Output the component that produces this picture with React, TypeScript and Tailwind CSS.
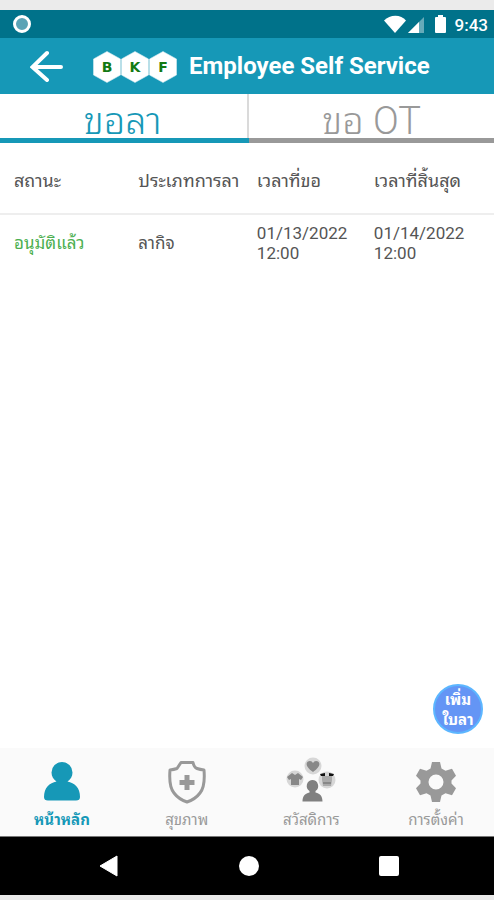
import { ReactNode, useState } from "react";

const requests = [
  { status: "อนุมัติแล้ว", type: "ลากิจ", from: ["01/13/2022", "12:00"], to: ["01/14/2022", "12:00"] },
];

function StatusBar() {
  return (
    <div className="flex h-7 shrink-0 items-center justify-between bg-[#00728a] pl-3 pr-1.5 text-white">
      <svg width="20" height="20" viewBox="0 0 20 20">
        <circle cx="10" cy="10" r="7.5" fill="#5ba3b5" stroke="#fff" strokeWidth="3" />
      </svg>
      <div className="flex items-center">
        <svg width="71" height="20" viewBox="0 0 71 20" fill="#fff">
          <path d="M0 6.500C6 .2 17 .2 22 6.500L11 19Z" />
          <path d="M40 3V19H24Z" opacity=".4" />
          <path d="M35 8V19H24Z" />
          <path d="M54 1h5v2h2q1 0 1 1v14q0 1-1 1h-9q-1 0-1-1V4q0-1 1-1h2z" />
        </svg>
        <span className="pt-0.5 text-[17px] font-medium leading-5">9:43</span>
      </div>
    </div>
  );
}

function Hexagon({ letter }: { letter: string }) {
  return (
    <svg width="28" height="32" viewBox="0 0 28 32">
      <path d="M14 .5 27.500 8V24L14 31.500.5 24V8Z" fill="#fff" stroke="#d9edf1" strokeWidth=".6" />
      <text x="14" y="21" textAnchor="middle" className="font-['DejaVu_Sans'] text-sm font-bold" fill="#137a13">
        {letter}
      </text>
    </svg>
  );
}

function Header() {
  return (
    <header className="flex h-14 shrink-0 items-center bg-[#1698b7] pl-7">
      <button aria-label="Back" className="p-0.5">
        <svg width="33" height="32" viewBox="0 0 33 32" fill="none" stroke="#fff" strokeWidth="4" strokeLinecap="round">
          <path d="M31 17H3M17 3 2.500 17 17 30" />
        </svg>
      </button>
      <div className="ml-7 mt-0.5 flex">
        <Hexagon letter="B" />
        <Hexagon letter="K" />
        <Hexagon letter="F" />
      </div>
      <h1 className="ml-3 whitespace-nowrap text-2xl font-bold text-white">Employee Self Service</h1>
    </header>
  );
}

function Tabs({ active, onSelect }: { active: number; onSelect: (i: number) => void }) {
  return (
    <div className="flex h-[49px] shrink-0" role="tablist">
      {["ขอลา", "ขอ OT"].map((label, i) => (
        <button
          key={label}
          role="tab"
          aria-selected={active === i}
          onClick={() => onSelect(i)}
          className={`flex flex-1 items-center justify-center border-b-[5px] pt-2.5 text-[38px] font-light leading-9 ${
            active === i ? "border-[#1698b7] text-[#1698b7]" : "border-[#999999] text-[#999999]"
          } ${i === 0 ? "pr-1 shadow-[inset_-2px_0_0_#dadada]" : ""}`}
        >
          {label}
        </button>
      ))}
    </div>
  );
}

function RequestTable() {
  return (
    <table className="w-full table-fixed text-left text-[17px] leading-5 text-[#555555]">
      <thead className="text-lg leading-5">
        <tr className="h-[71px] border-b-2 border-[#eeeeee]">
          <th className="w-[28%] pl-3.5 pt-1.5 font-normal">สถานะ</th>
          <th className="w-[24%] whitespace-nowrap pt-1.5 font-normal">ประเภทการลา</th>
          <th className="w-[117px] pt-1.5 font-normal">เวลาที่ขอ</th>
          <th className="pt-1.5 font-normal">เวลาที่สิ้นสุด</th>
        </tr>
      </thead>
      <tbody>
        {requests.map((r) => (
          <tr key={r.from[0]} className="h-14">
            <td className="pl-3.5 text-[#4caf50]">{r.status}</td>
            <td>{r.type}</td>
            <td>
              {r.from[0]}
              <br />
              {r.from[1]}
            </td>
            <td>
              {r.to[0]}
              <br />
              {r.to[1]}
            </td>
          </tr>
        ))}
      </tbody>
    </table>
  );
}

function NavItem({ label, active, children }: { label: string; active?: boolean; children: ReactNode }) {
  return (
    <a
      href="#"
      className={`flex w-[110px] flex-col items-center pt-2 text-[15px] leading-5 ${
        active ? "font-bold text-[#1698b7]" : "text-[#999999]"
      }`}
    >
      <svg width="52" height="50" viewBox="0 0 52 50" fill="currentColor">
        {children}
      </svg>
      <span className="mt-1">{label}</span>
    </a>
  );
}

function BottomNav() {
  return (
    <nav className="flex h-[88px] shrink-0 justify-between bg-[#fafafa] pl-[7px] pr-[3px]">
      <NavItem label="หน้าหลัก" active>
        <path d="M26 6a10.500 10.500 0 0 1 10.500 10.500c0 4-2 7-5 9 7 1.500 12.500 6 12.500 15.500q0 3.500-4 3.500H12q-4 0-4-3.500c0-9.500 5.500-14 12.500-15.500-3-2-5-5-5-9A10.500 10.500 0 0 1 26 6Z" />
      </NavItem>
      <NavItem label="สุขภาพ">
        <path
          d="M20 6.500h12q1 5 4 6t7 1.500c1 12 0 18-4 23-3 4-7 7-13 9-6-2-10-5-13-9-4-5-5-11-4-23 4-.5 4-.5 7-1.500t4-6Z"
          fill="none"
          stroke="currentColor"
          strokeWidth="3"
          strokeLinejoin="round"
        />
        <path d="M23.500 19h5v5h5v5h-5v5h-5v-5h-5v-5h5z" />
      </NavItem>
      <NavItem label="สวัสดิการ">
        <g fill="#d7d7d7">
          <circle cx="28" cy="10" r="8.500" />
          <circle cx="10" cy="23" r="8.500" />
          <circle cx="42" cy="24" r="8.500" />
        </g>
        <path d="M28 16c-9-6-7-11-3-11q2 0 3 2 1-2 3-2c4 0 6 5-3 11ZM7 17l3 2 3-2 5 4-2 3-2-1v6H6v-6l-2 1-2-3Z" fill="#888" />
        <path d="M37 20h10v4l-1 6h-8l-1-6Z" fill="#aaa" />
        <path d="M35 18l5-1v3h-4ZM49 18l-5-1v3h4Z" fill="#111" />
        <path d="M38 27h8" stroke="#888" strokeWidth="2" />
        <path d="M27 24a6 6 0 0 1 3.500 11v1.500c5 1 7 4 7 9h-20c0-5 2-8 7-9V35A6 6 0 0 1 27 24Z" fill="#808080" />
      </NavItem>
      <NavItem label="การตั้งค่า">
        <path
          fillRule="evenodd"
          d="M22 6h8l1.500 6.500 4 2.300 6.500-2 4 7-4.500 4.700v3l4.500 4.700-4 7-6.500-2-4 2.300L30 46h-8l-1.500-6.500-4-2.300-6.500 2-4-7 4.500-4.700v-3L6 19.800l4-7 6.500 2 4-2.300ZM26 18.500a7.500 7.500 0 1 0 0 15 7.500 7.500 0 0 0 0-15Z"
        />
      </NavItem>
    </nav>
  );
}

function SystemNav() {
  return (
    <div className="flex h-[59px] shrink-0 items-center justify-center gap-[120px] border-t border-[#777777] bg-black pl-1">
      <button aria-label="Back">
        <svg width="20" height="22" viewBox="0 0 20 22">
          <path d="M1 11 18 1V21Z" fill="#fff" stroke="#fff" strokeLinejoin="round" />
        </svg>
      </button>
      <button aria-label="Home" className="size-5 rounded-full bg-white" />
      <button aria-label="Recent apps" className="size-5 rounded-xs bg-white" />
    </div>
  );
}

export default function App() {
  const [tab, setTab] = useState(0);

  return (
    <div
      lang="th"
      className="flex min-h-screen flex-col bg-[#ebebeb] pb-[5px] pt-2.5 font-[Roboto,'Noto_Sans_Thai_Looped',Loma,Garuda,Waree,'Noto_Sans_Thai',sans-serif]"
    >
      <StatusBar />
      <Header />
      <main className="relative flex flex-1 flex-col bg-white">
        <Tabs active={tab} onSelect={setTab} />
        <RequestTable />
        {/* Floating "add leave request" button */}
        <button className="absolute bottom-3.5 right-[11px] size-[50px] rounded-full border-2 border-[#5cb6ff] bg-[#6495f5] pt-0.5 text-[15px] font-bold leading-5 text-white">
          เพิ่ม
          <br />
          ใบลา
        </button>
      </main>
      <BottomNav />
      <SystemNav />
    </div>
  );
}
